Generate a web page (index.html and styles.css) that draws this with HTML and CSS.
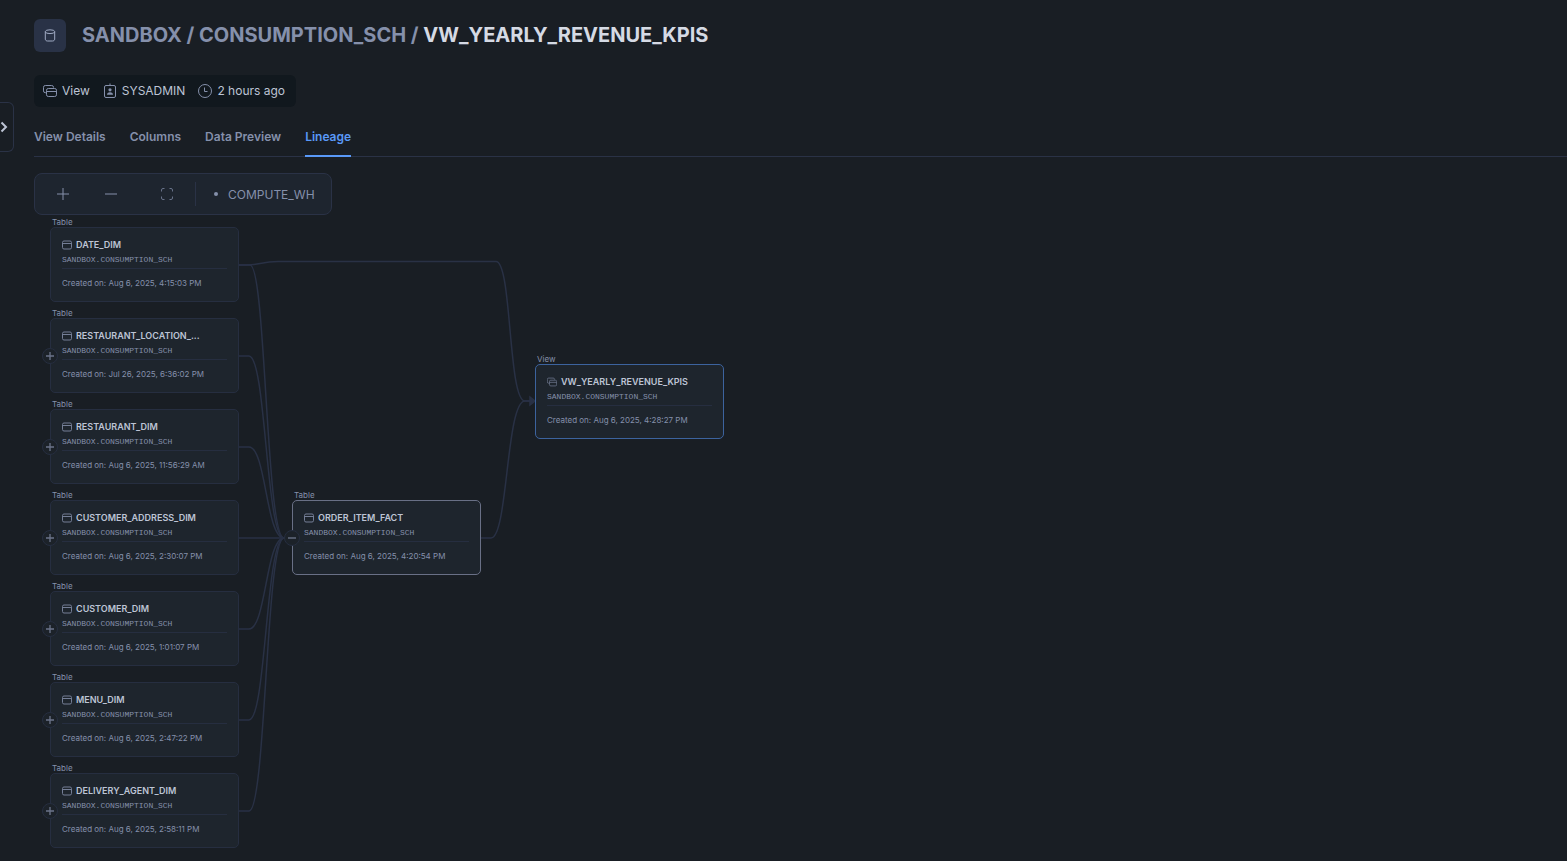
FILE: index.html
```html
<!DOCTYPE html>
<html lang="en">
<head>
<meta charset="utf-8">
<meta name="viewport" content="width=device-width, initial-scale=1">
<title>VW_YEARLY_REVENUE_KPIS - Lineage</title>
<link rel="stylesheet" href="styles.css">
</head>
<body>
<svg class="symbols" aria-hidden="true">
  <symbol id="i-table" viewBox="0 0 10 10"><rect x=".5" y="1" width="9" height="8" rx="1.5"/><path d="M.5 3.5h9"/></symbol>
  <symbol id="i-view" viewBox="0 0 14 14"><path d="M3.300 8.700H2.300A1.800 1.800 0 0 1 .5 6.900V3.300a1.800 1.800 0 0 1 1.800-1.800h6.400a1.800 1.800 0 0 1 1.800 1.800v.4"/><rect x="3.500" y="4.500" width="10" height="8" rx="1.800"/><path d="M3.500 7.500h10"/></symbol>
  <symbol id="i-plus" viewBox="0 0 12 12"><path d="M6 0v12M0 6h12"/></symbol>
  <symbol id="i-minus" viewBox="0 0 12 12"><path d="M0 6h12"/></symbol>
</svg>
<button class="drawer" type="button" aria-label="Expand sidebar"><svg viewBox="0 0 8 12"><path d="M1.5 1.5 6 6l-4.500 4.500"/></svg></button>
<main class="page">
  <header class="heading">
    <span class="badge"><svg viewBox="0 0 12 14"><ellipse cx="6" cy="2.700" rx="4.700" ry="1.900"/><path d="M1.300 2.700v7.300c0 1.300 1 2 2.200 2h5c1.200 0 2.200-.7 2.200-2V2.700"/></svg></span>
    <h1 class="title">SANDBOX / CONSUMPTION_SCH / <strong>VW_YEARLY_REVENUE_KPIS</strong></h1>
  </header>
  <ul class="meta">
    <li><svg viewBox="0 0 14 14"><use href="#i-view"/></svg>View</li>
    <li><svg viewBox="0 0 14 16"><rect x="1.500" y="2.500" width="11" height="12" rx="1.500"/><path d="M7 .5v2"/><g class="solid"><circle cx="7" cy="6.800" r="1.600"/><path d="M4 11.800c0-1.500 1-2.600 3-2.600s3 1.100 3 2.600z"/></g></svg>SYSADMIN</li>
    <li><svg viewBox="0 0 14 14"><circle cx="7" cy="7" r="6.500"/><path d="M6.500 3.500V7.500h3"/></svg>2 hours ago</li>
  </ul>
  <nav class="tabs">
    <a href="#details">View Details</a>
    <a href="#columns">Columns</a>
    <a href="#preview">Data Preview</a>
    <a href="#lineage" class="active" aria-current="page">Lineage</a>
  </nav>
  <section class="canvas" aria-label="Lineage graph">
    <svg class="edges" aria-hidden="true">
      <g transform="translate(-34 -157)">
        <path d="M239 265h8c12 0 15-3.500 31-3.500h218C512 261.500 508 401 525 401h6"/>
        <path d="M239 265h11C266 265 266 538 284 538"/>
        <path d="M239 356h10C266 356 266 538 284 538"/>
        <path d="M239 447h10C266 447 266 538 284 538"/>
        <path d="M239 538h46"/>
        <path d="M239 629h10C266 629 266 538 284 538"/>
        <path d="M239 720h10C266 720 266 538 284 538"/>
        <path d="M239 811h10C266 811 266 538 284 538"/>
        <path d="M481 538h10C508 538 506 401 525 401h6"/>
        <path class="arrow" d="M530 397l5 4-5 4z"/>
      </g>
    </svg>
    <div class="column sources">
      <article class="node"><span class="kind">Table</span><div class="card"><h2><svg><use href="#i-table"/></svg>DATE_DIM</h2><p class="path">SANDBOX.CONSUMPTION_SCH</p><p class="created">Created on: Aug 6, 2025, 4:15:03 PM</p></div></article>
      <article class="node"><span class="kind">Table</span><div class="card"><button class="handle" type="button" aria-label="Expand"><svg><use href="#i-plus"/></svg></button><h2><svg><use href="#i-table"/></svg>RESTAURANT_LOCATION_...</h2><p class="path">SANDBOX.CONSUMPTION_SCH</p><p class="created">Created on: Jul 26, 2025, 6:36:02 PM</p></div></article>
      <article class="node"><span class="kind">Table</span><div class="card"><button class="handle" type="button" aria-label="Expand"><svg><use href="#i-plus"/></svg></button><h2><svg><use href="#i-table"/></svg>RESTAURANT_DIM</h2><p class="path">SANDBOX.CONSUMPTION_SCH</p><p class="created">Created on: Aug 6, 2025, 11:56:29 AM</p></div></article>
      <article class="node"><span class="kind">Table</span><div class="card"><button class="handle" type="button" aria-label="Expand"><svg><use href="#i-plus"/></svg></button><h2><svg><use href="#i-table"/></svg>CUSTOMER_ADDRESS_DIM</h2><p class="path">SANDBOX.CONSUMPTION_SCH</p><p class="created">Created on: Aug 6, 2025, 2:30:07 PM</p></div></article>
      <article class="node"><span class="kind">Table</span><div class="card"><button class="handle" type="button" aria-label="Expand"><svg><use href="#i-plus"/></svg></button><h2><svg><use href="#i-table"/></svg>CUSTOMER_DIM</h2><p class="path">SANDBOX.CONSUMPTION_SCH</p><p class="created">Created on: Aug 6, 2025, 1:01:07 PM</p></div></article>
      <article class="node"><span class="kind">Table</span><div class="card"><button class="handle" type="button" aria-label="Expand"><svg><use href="#i-plus"/></svg></button><h2><svg><use href="#i-table"/></svg>MENU_DIM</h2><p class="path">SANDBOX.CONSUMPTION_SCH</p><p class="created">Created on: Aug 6, 2025, 2:47:22 PM</p></div></article>
      <article class="node"><span class="kind">Table</span><div class="card"><button class="handle" type="button" aria-label="Expand"><svg><use href="#i-plus"/></svg></button><h2><svg><use href="#i-table"/></svg>DELIVERY_AGENT_DIM</h2><p class="path">SANDBOX.CONSUMPTION_SCH</p><p class="created">Created on: Aug 6, 2025, 2:58:11 PM</p></div></article>
    </div>
    <div class="column fact">
      <article class="node"><span class="kind">Table</span><div class="card highlighted"><button class="handle" type="button" aria-label="Collapse"><svg><use href="#i-minus"/></svg></button><h2><svg><use href="#i-table"/></svg>ORDER_ITEM_FACT</h2><p class="path">SANDBOX.CONSUMPTION_SCH</p><p class="created">Created on: Aug 6, 2025, 4:20:54 PM</p></div></article>
    </div>
    <div class="column result">
      <article class="node"><span class="kind">View</span><div class="card selected"><h2><svg><use href="#i-view"/></svg>VW_YEARLY_REVENUE_KPIS</h2><p class="path">SANDBOX.CONSUMPTION_SCH</p><p class="created">Created on: Aug 6, 2025, 4:28:27 PM</p></div></article>
    </div>
    <div class="toolbar">
      <button type="button" aria-label="Zoom in"><svg viewBox="0 0 12 12"><use href="#i-plus"/></svg></button>
      <button type="button" aria-label="Zoom out"><svg viewBox="0 0 12 12"><use href="#i-minus"/></svg></button>
      <button type="button" class="fit" aria-label="Fit to screen"><svg viewBox="0 0 12 12"><path d="M.5 3.500V2A1.500 1.500 0 0 1 2 .5h1.500M8.500.5H10A1.500 1.500 0 0 1 11.500 2v1.500M11.500 8.500V10a1.500 1.500 0 0 1-1.500 1.500H8.500M3.500 11.500H2A1.500 1.500 0 0 1 .5 10V8.500"/></svg></button>
      <button type="button" class="warehouse"><span class="dot"></span>COMPUTE_WH</button>
    </div>
  </section>
</main>
</body>
</html>
```

FILE: styles.css
```css
* { box-sizing: border-box; }
body {
  margin: 0;
  background: #191e24;
  color: #bdc4d5;
  font-family: Inter, "Liberation Sans", sans-serif;
  font-size: 12px;
}
h1, h2, p, ul { margin: 0; padding: 0; }
button { font: inherit; color: inherit; padding: 0; border: 0; background: none; }
svg { display: block; fill: none; stroke: currentColor; }
.symbols { position: absolute; width: 0; height: 0; }
.page { display: flex; flex-direction: column; min-height: 100vh; padding: 19px 0 0 34px; }

.drawer {
  position: absolute; left: 0; top: 102px;
  width: 14px; height: 50px;
  border: 1px solid #2a3246; border-left: 0;
  border-radius: 0 6px 6px 0;
  color: #bdc4d5;
}
.drawer svg { width: 8px; height: 12px; stroke-width: 2; }

.heading { display: flex; align-items: flex-start; gap: 16px; }
.badge {
  display: grid; place-items: center;
  width: 32px; height: 33px;
  border-radius: 6px;
  background: #293246; color: #a0abc4;
}
.badge svg { width: 12px; height: 14px; }
.title { font-size: 20px; line-height: 32px; font-weight: 700; color: #8590ab; }
.title strong { font-weight: 700; color: #d5dae4; }

.meta {
  display: flex; align-self: flex-start; gap: 13px;
  margin-top: 23px; padding: 0 11px 0 9px;
  border-radius: 6px;
  background: #11181e;
  list-style: none; line-height: 32px;
}
.meta li { display: flex; align-items: center; gap: 5px; }
.meta svg { width: 14px; height: 16px; color: #8590ab; }
.meta .solid { fill: currentColor; stroke: none; }

.tabs { display: flex; gap: 24px; height: 50px; padding-top: 10px; border-bottom: 1px solid #2a3246; }
.tabs a {
  height: 40px; padding-top: 10px;
  border-bottom: 2px solid transparent;
  color: #8590ab; font-weight: 600; line-height: 20px; text-decoration: none;
}
.tabs .active { color: #5999f8; border-color: #5999f8; }

.canvas { position: relative; flex: 1; min-height: 700px; }
.toolbar {
  position: absolute; left: 0; top: 16px;
  display: flex; align-items: center;
  height: 42px; padding: 0 16px 0 4px;
  border: 1px solid #2a3246; border-radius: 8px;
  background: #1e252f; color: #8590ab;
}
.toolbar button { display: grid; place-items: center; width: 48px; height: 24px; }
.toolbar svg { width: 12px; height: 12px; }
.toolbar .fit { width: 60px; padding-left: 4px; color: #69738a; }
.toolbar .warehouse {
  display: flex; gap: 10px; width: auto;
  padding-left: 18px; border-left: 1px solid #2a3246;
}
.dot { width: 4px; height: 4px; border-radius: 50%; background: currentColor; }

.edges { position: absolute; inset: 0; width: 100%; height: 100%; color: #293145; stroke-width: 1.5; }
.edges .arrow { fill: currentColor; }

.column { position: absolute; display: flex; flex-direction: column; gap: 6px; width: 189px; }
.sources { left: 16px; top: 60px; }
.fact { left: 258px; top: 333px; }
.result { left: 501px; top: 197px; }
.kind { display: block; padding-left: 2px; font-size: 8px; line-height: 10px; color: #8590ab; }
.card {
  position: relative; height: 75px; padding: 10px 11px 0;
  border: 1px solid #262e40; border-radius: 5px;
  background: #1e252d;
}
.highlighted { border-color: #697086; }
.selected { border-color: #3c639e; }
.card h2 {
  display: flex; align-items: center; gap: 4px;
  font-size: 9px; line-height: 14px; font-weight: 600; white-space: nowrap;
}
.card h2 svg { width: 10px; height: 10px; color: #747e96; }
.path {
  padding: 1px 0 2px; border-bottom: 1px solid #262e40;
  font-family: "Liberation Mono", monospace;
  font-size: 8px; line-height: 13px; color: #8590ab;
}
.created { padding-top: 8px; font-size: 8px; line-height: 12px; color: #8590ab; }
.handle {
  position: absolute; left: -9px; top: 29px;
  display: grid; place-items: center;
  width: 16px; height: 16px;
  border: 1px solid #262e40; border-radius: 50%;
}
.card .handle { background: #1c2229; color: #6b748a; }
.card .handle svg { width: 8px; height: 8px; stroke-width: 2; }
```
